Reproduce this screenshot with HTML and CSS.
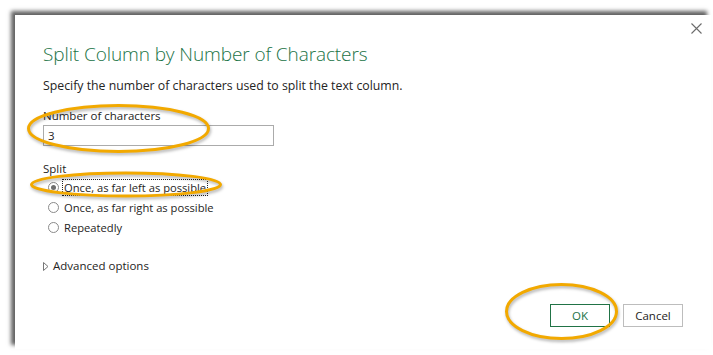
FILE: index.html
```html
<!DOCTYPE html>
<html>
<head>
<meta charset="utf-8">
<link rel="stylesheet" href="styles.css">
</head>
<body>
<div class="dialog">
  <button class="close" aria-label="Close">
    <svg width="11" height="11" viewBox="0 0 11 11"><path d="M0.5 0.5 L10.5 10.5 M10.5 0.5 L0.5 10.5" stroke="#6b6b6b" stroke-width="1.1" fill="none"/></svg>
  </button>
  <h1 class="title">Split Column by Number of Characters</h1>
  <p class="subtitle">Specify the number of characters used to split the text column.</p>
  <div class="field">
    <label class="label">Number of characters</label>
    <div class="input">3</div>
  </div>
  <div class="group">
    <div class="label">Split</div>
    <div class="radios">
      <div class="radio checked"><span class="dot"></span><span class="rlabel focus">Once, as far left as possible</span></div>
      <div class="radio"><span class="dot"></span><span class="rlabel">Once, as far right as possible</span></div>
      <div class="radio"><span class="dot"></span><span class="rlabel">Repeatedly</span></div>
    </div>
  </div>
  <div class="advanced">
    <svg width="6" height="9" viewBox="0 0 6 9"><path d="M0.5 0.5 L5 4.5 L0.5 8.5 Z" fill="none" stroke="#777" stroke-width="1"/></svg>
    <span>Advanced options</span>
  </div>
  <div class="footer">
    <button class="btn primary">OK</button>
    <button class="btn">Cancel</button>
  </div>
</div>
<svg class="marks" width="713" height="355" viewBox="0 0 713 355">
  <g fill="none" stroke="#F2A900" stroke-width="3">
    <ellipse cx="118.5" cy="128.5" rx="90" ry="23"/>
    <ellipse cx="126" cy="184.5" rx="94.5" ry="11.5"/>
    <ellipse cx="561.5" cy="311.5" rx="55" ry="27"/>
  </g>
</svg>
</body>
</html>
```

FILE: styles.css
```css
* { box-sizing: border-box; }
html, body { margin: 0; padding: 0; background: #fff; }
body {
  width: 713px;
  height: 355px;
  overflow: hidden;
  position: relative;
  font-family: "Open Sans", "Noto Sans", sans-serif;
  color: #252423;
}
.dialog {
  position: relative;
  margin: 15px 0 0 15px;
  width: 696px;
  height: 334px;
  background: #fff;
  box-shadow: -4px -4px 4px rgba(0,0,0,0.62);
  padding: 26px 28px 22px 28px;
  display: flex;
  flex-direction: column;
}
.close {
  position: absolute;
  top: 8px;
  right: 9px;
  width: 11px;
  height: 11px;
  padding: 0;
  border: 0;
  background: none;
  display: flex;
}
.title {
  margin: 0;
  font-weight: 300;
  font-size: 19px;
  line-height: 26px;
  color: #217346;
  letter-spacing: -0.1px;
}
.subtitle {
  margin: 10px 0 0 0;
  font-size: 12.3px;
  line-height: 18px;
  color: #252423;
}
.field { margin-top: 13px; display: flex; flex-direction: column; }
.label { font-size: 11.5px; line-height: 16px; }
.input {
  margin-top: 1px;
  width: 231px;
  height: 21px;
  border: 1px solid #ababab;
  font-size: 11.5px;
  line-height: 19px;
  padding-left: 4px;
}
.group { margin-top: 15px; }
.radios { display: flex; flex-direction: column; margin-top: 0; }
.radio { display: flex; align-items: center; height: 20px; font-size: 11.2px; }
.dot {
  width: 11px; height: 11px;
  border: 1px solid #8a8a8a;
  border-radius: 50%;
  margin: 0 3px 0 5px;
  display: flex; align-items: center; justify-content: center;
}
.checked .dot::after {
  content: "";
  width: 5px; height: 5px;
  border-radius: 50%;
  background: #6e6e6e;
}
.rlabel { line-height: 15px; padding: 0 1px; border: 1px solid transparent; }
.rlabel.focus { border: 1px dotted #222; }
.advanced {
  margin-top: 21px;
  display: flex;
  align-items: center;
  gap: 4px;
  font-size: 11.5px;
  line-height: 16px;
}
.footer {
  margin-top: auto;
  display: flex;
  justify-content: flex-end;
  gap: 13px;
}
.btn {
  width: 60px;
  height: 23px;
  border: 1px solid #bdbdbd;
  background: #fff;
  font-family: inherit;
  font-size: 11.5px;
  color: #252423;
  padding: 0;
}
.btn.primary { border-color: #217346; color: #217346; }
.marks {
  position: absolute;
  left: 0; top: 0;
  pointer-events: none;
  filter: drop-shadow(1px 2px 1.5px rgba(0,0,0,0.3));
}
```
